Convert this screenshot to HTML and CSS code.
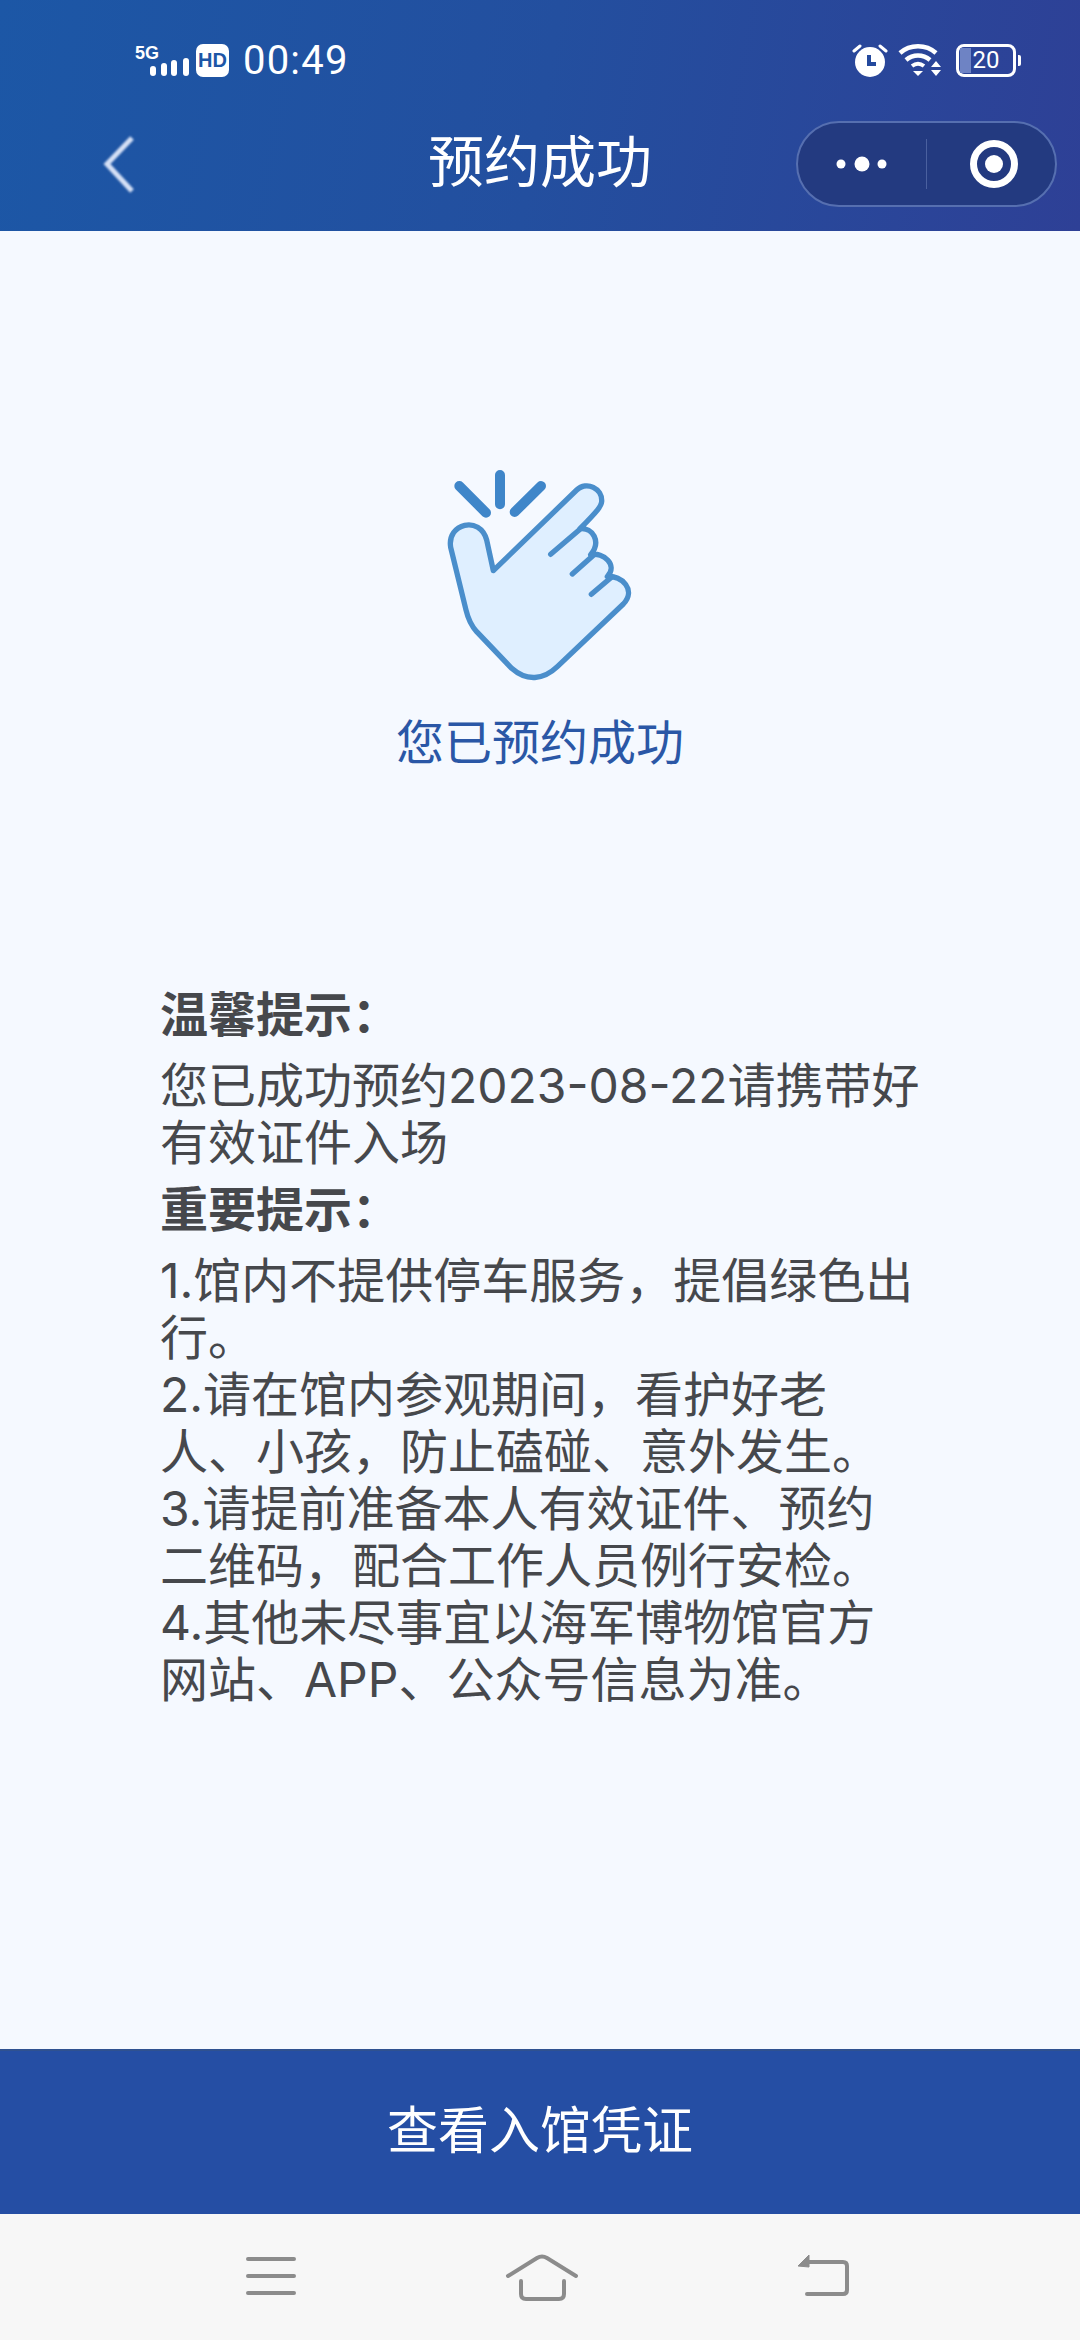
FILE: index.html
```html
<!DOCTYPE html>
<html>
<head>
  <meta charset="UTF-8">
  <title>预约成功</title>
  <link rel="stylesheet" href="styles.css">
</head>
<body>
  <div class="page">
    <header class="top">
      <div class="status">
        <div class="status-left">
          <svg class="signal" width="55" height="34" viewBox="0 0 55 34">
            <text x="0" y="16" class="net">5G</text>
            <rect x="15" y="23" width="6" height="10" rx="3" fill="#fff"/>
            <rect x="26" y="20" width="6" height="13" rx="3" fill="#fff"/>
            <rect x="36" y="17" width="6" height="16" rx="3" fill="#fff"/>
            <rect x="48" y="15" width="6" height="18" rx="3" fill="#fff"/>
          </svg>
          <div class="hd">HD</div>
          <div class="time">00:49</div>
        </div>
        <div class="status-right">
          <svg width="36" height="36" viewBox="0 0 36 36">
            <circle cx="18" cy="20" r="15" fill="#fff"/>
            <path d="M2 9 L8 4 M28 4 L34 9" stroke="#fff" stroke-width="3" stroke-linecap="round" fill="none"/>
            <path d="M17 13 V22 H24" stroke="#24499d" stroke-width="4" fill="none"/>
          </svg>
          <svg width="46" height="34" viewBox="0 0 46 34">
            <path d="M2 10 C12 1 28 1 38 10" stroke="#fff" stroke-width="4.5" fill="none"/>
            <path d="M8 17 C15 11 25 11 32 17" stroke="#fff" stroke-width="4.5" fill="none"/>
            <path d="M14 23 C18 20 22 20 26 23" stroke="#fff" stroke-width="4" fill="none"/>
            <path d="M15 28 H25 L20 33 Z" fill="#fff"/>
            <path d="M33 24 L38 18 L43 24 Z M33 27 H43 L38 33 Z" fill="#fff"/>
          </svg>
          <div class="battery">
            <span class="battery-fill"></span>
            <span class="battery-num">20</span>
          </div>
        </div>
      </div>
      <div class="navbar">
        <svg class="back" width="34" height="60" viewBox="0 0 34 60">
          <path d="M30 4 L5 30 L30 57" stroke="#d6e1f6" stroke-width="5" fill="none"/>
        </svg>
        <div class="title">预约成功</div>
        <div class="capsule">
          <div class="capsule-part">
            <svg width="60" height="20" viewBox="0 0 60 20">
              <circle cx="9" cy="10" r="4.5" fill="#fff"/>
              <circle cx="30" cy="10" r="7.5" fill="#fff"/>
              <circle cx="50" cy="10" r="4.5" fill="#fff"/>
            </svg>
          </div>
          <div class="capsule-line"></div>
          <div class="capsule-part">
            <svg class="capsule-ring" width="50" height="50" viewBox="0 0 50 50">
              <circle cx="25" cy="25" r="20.5" stroke="#fff" stroke-width="7" fill="none"/>
              <circle cx="25" cy="25" r="9" fill="#fff"/>
            </svg>
          </div>
        </div>
      </div>
    </header>

    <main class="content">
      <div class="done">
        <svg class="hand" width="300" height="270" viewBox="30 0 900 810">
          <path d="M340 392 L590 150 C620 122 668 145 665 185 C664 198 655 210 600 266 C638 262 665 305 632 344 C670 335 715 375 682 410 C725 405 770 450 730 492 L532 680 C490 720 440 725 395 685 L290 575 C272 555 265 540 258 510 L212 322 C200 250 300 225 320 300 Z" fill="#dfefff" stroke="#4a8ecb" stroke-width="16" stroke-linejoin="round"/>
          <path d="M512 343 L600 268 M577 402 L642 344 M634 463 L696 410" stroke="#4a8ecb" stroke-width="16" stroke-linecap="round" fill="none"/>
          <path d="M238 138 L318 218 M360 105 V193 M483 138 L404 216" stroke="#3f86c9" stroke-width="30" stroke-linecap="round" fill="none"/>
        </svg>
        <div class="done-text">您已预约成功</div>
      </div>

      <div class="tips">
        <div class="tips-head">温馨提示：</div>
        <div class="tips-text">您已成功预约2023-08-22请携带好<br>有效证件入场</div>
        <div class="tips-head">重要提示：</div>
        <div class="tips-text">1.馆内不提供停车服务，提倡绿色出<br>行。<br>2.请在馆内参观期间，看护好老<br>人、小孩，防止磕碰、意外发生。<br>3.请提前准备本人有效证件、预约<br>二维码，配合工作人员例行安检。<br>4.其他未尽事宜以海军博物馆官方<br>网站、APP、公众号信息为准。</div>
      </div>
    </main>

    <div class="ticket-btn">查看入馆凭证</div>

    <nav class="sysbar">
      <svg width="54" height="44" viewBox="0 0 54 44">
        <path d="M4 5 H50 M4 22 H50 M4 39 H50" stroke="#8c8c8c" stroke-width="4" stroke-linecap="round" fill="none"/>
      </svg>
      <svg width="74" height="48" viewBox="0 0 74 48">
        <path d="M3 22 L32 4 Q37 1 42 4 L71 22" stroke="#8c8c8c" stroke-width="4" stroke-linecap="round" fill="none"/>
        <path d="M16 27 V40 Q16 45 21 45 H54 Q59 45 59 40 V27" stroke="#8c8c8c" stroke-width="4" stroke-linecap="round" fill="none"/>
      </svg>
      <svg width="56" height="44" viewBox="0 0 56 44">
        <path d="M14 1 V13 L3 12 Z" fill="#8c8c8c" stroke="#8c8c8c" stroke-linejoin="round"/>
        <path d="M12 8 H48 Q52 8 52 12 V36 Q52 40 48 40 H12" stroke="#8c8c8c" stroke-width="4" stroke-linecap="round" fill="none"/>
      </svg>
    </nav>
  </div>
</body>
</html>
```

FILE: styles.css
```css
* {
  margin: 0;
  padding: 0;
  box-sizing: border-box;
}

body {
  background: #f5f9ff;
  font-family: Inter, "Noto Sans CJK SC", sans-serif;
}

.page {
  width: 1080px;
  height: 2340px;
  display: flex;
  flex-direction: column;
  overflow: hidden;
}

.top {
  height: 231px;
  background: linear-gradient(100deg, #1c57a6 0%, #234f9f 50%, #2e4096 100%);
  color: #fff;
}

.status {
  height: 121px;
  padding: 42px 64px 0 135px;
  display: flex;
  align-items: flex-start;
  justify-content: space-between;
}
.status-left {
  display: flex;
  align-items: center;
}
.signal {
  display: block;
  overflow: visible;
}
.net {
  font-family: "Liberation Sans", sans-serif;
  font-size: 18px;
  font-weight: 700;
  fill: #fff;
}
.hd {
  width: 33px;
  height: 33px;
  margin-left: 6px;
  background: #fff;
  border-radius: 7px;
  color: #1d56a6;
  font-family: "Liberation Sans", sans-serif;
  font-size: 20px;
  font-weight: 700;
  line-height: 33px;
  text-align: center;
}
.time {
  margin-left: 14px;
  padding-top: 2px;
  font-family: Roboto, sans-serif;
  font-size: 40px;
  line-height: 34px;
  letter-spacing: 1.2px;
}
.status-right {
  display: flex;
  align-items: center;
  gap: 10px;
}

.battery {
  position: relative;
  width: 60px;
  height: 33px;
  margin-left: 2px;
  border: 3px solid #fff;
  border-radius: 8px;
  display: flex;
  align-items: center;
  justify-content: center;
}
.battery::after {
  content: "";
  position: absolute;
  right: -8px;
  top: 8px;
  width: 3px;
  height: 11px;
  background: #fff;
  border-radius: 0 2px 2px 0;
}
.battery-fill {
  position: absolute;
  left: 1px;
  top: 1px;
  bottom: 1px;
  width: 11px;
  background: #6e83c4;
}
.battery-num {
  position: relative;
  font-family: Roboto, sans-serif;
  font-size: 24px;
  line-height: 27px;
}

.navbar {
  height: 86px;
  padding: 0 23px;
  display: grid;
  grid-template-columns: 1fr auto 1fr;
  align-items: center;
}
.back {
  display: block;
  margin-left: 79px;
  filter: blur(0.8px);
}
.title {
  margin-bottom: 4px;
  font-size: 56px;
  line-height: 78px;
}
.capsule {
  justify-self: end;
  width: 261px;
  height: 86px;
  background: #233a80;
  border: 2px solid #566fb0;
  border-radius: 43px;
  display: flex;
  align-items: center;
}
.capsule-part {
  flex: 1;
  display: flex;
  align-items: center;
  justify-content: center;
}
.capsule-part svg {
  display: block;
}
.capsule-part .capsule-ring {
  margin-left: 6px;
}
.capsule-line {
  width: 1px;
  height: 50px;
  background: #4a609f;
}

.content {
  flex: 1;
  padding-top: 209px;
}
.done {
  display: flex;
  flex-direction: column;
  align-items: center;
}
.hand {
  display: block;
  filter: blur(0.6px);
}
.done-text {
  margin-top: 4px;
  color: #2a57a6;
  font-size: 48px;
  line-height: 57px;
}

.tips {
  margin-top: 215px;
  padding-left: 160px;
  color: #46484c;
  font-size: 48px;
  line-height: 57px;
  white-space: nowrap;
}
.tips-head {
  font-weight: 700;
}
.tips-text {
  margin: 14px 0 10px;
}

.ticket-btn {
  height: 165px;
  background: #254ea4;
  border-top: 2px solid #2f5190;
  color: #fff;
  font-size: 51px;
  line-height: 160px;
  text-align: center;
}

.sysbar {
  height: 126px;
  background: #f7f7f7;
  display: grid;
  grid-template-columns: 271px 271px 291px;
  justify-content: start;
  padding: 40px 0 0 135px;
}
.sysbar svg {
  display: block;
  justify-self: center;
}
```
